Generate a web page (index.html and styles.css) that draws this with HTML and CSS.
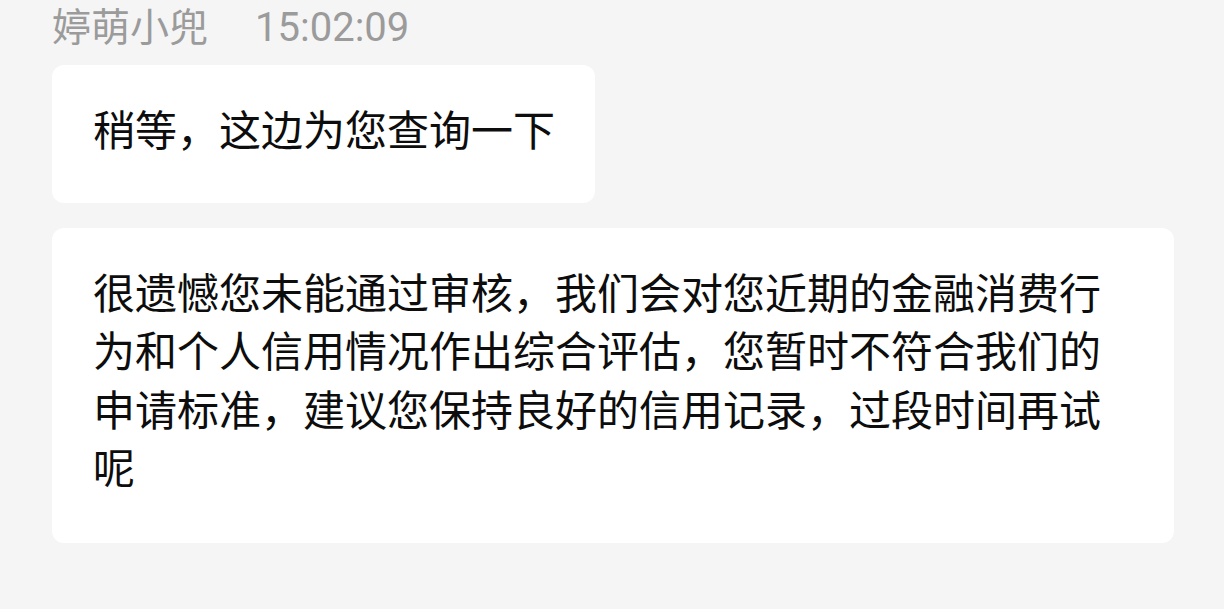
FILE: index.html
```html
<!DOCTYPE html>
<html lang="zh-CN">
<head>
    <meta charset="UTF-8">
    <meta name="viewport" content="width=device-width, initial-scale=1.0">
    <title>Chat</title>
    <link rel="stylesheet" href="styles.css">
</head>
<body>

    <div class="chat">
        <!-- Sender line -->
        <div class="meta">
            <span class="name">婷萌小兜</span>
            <span class="time">15:02:09</span>
        </div>

        <!-- Messages -->
        <div class="bubble short">稍等，这边为您查询一下</div>
        <div class="bubble long">很遗憾您未能通过审核，我们会对您近期的金融消费行为和个人信用情况作出综合评估，您暂时不符合我们的申请标准，建议您保持良好的信用记录，过段时间再试呢</div>
    </div>

</body>
</html>
```

FILE: styles.css
```css
* {
    box-sizing: border-box;
    margin: 0;
    padding: 0;
}

body {
    font-family: 'Roboto', 'Noto Sans CJK SC', sans-serif;
    background-color: #f5f5f5;
    color: #111;
}

.chat {
    display: flex;
    flex-direction: column;
    align-items: flex-start;
    padding: 3px 0 0 52px;
}

.meta {
    display: flex;
    align-items: baseline;
    gap: 47px;
    font-size: 39px;
    line-height: 50px;
    color: #9b9b9b;
    margin-bottom: 12px;
}

.meta .time {
    font-size: 40px;
}

.bubble {
    background-color: #ffffff;
    border-radius: 12px;
    font-family: 'Noto Sans CJK SC', sans-serif;
    font-size: 42px;
    line-height: 58.5px;
    color: #0d0d0d;
}

.short {
    padding: 34px 40px 45px 41px;
    margin-bottom: 25px;
}

.long {
    width: 1122px;
    padding: 34px 60px 47px 41px;
}
```
